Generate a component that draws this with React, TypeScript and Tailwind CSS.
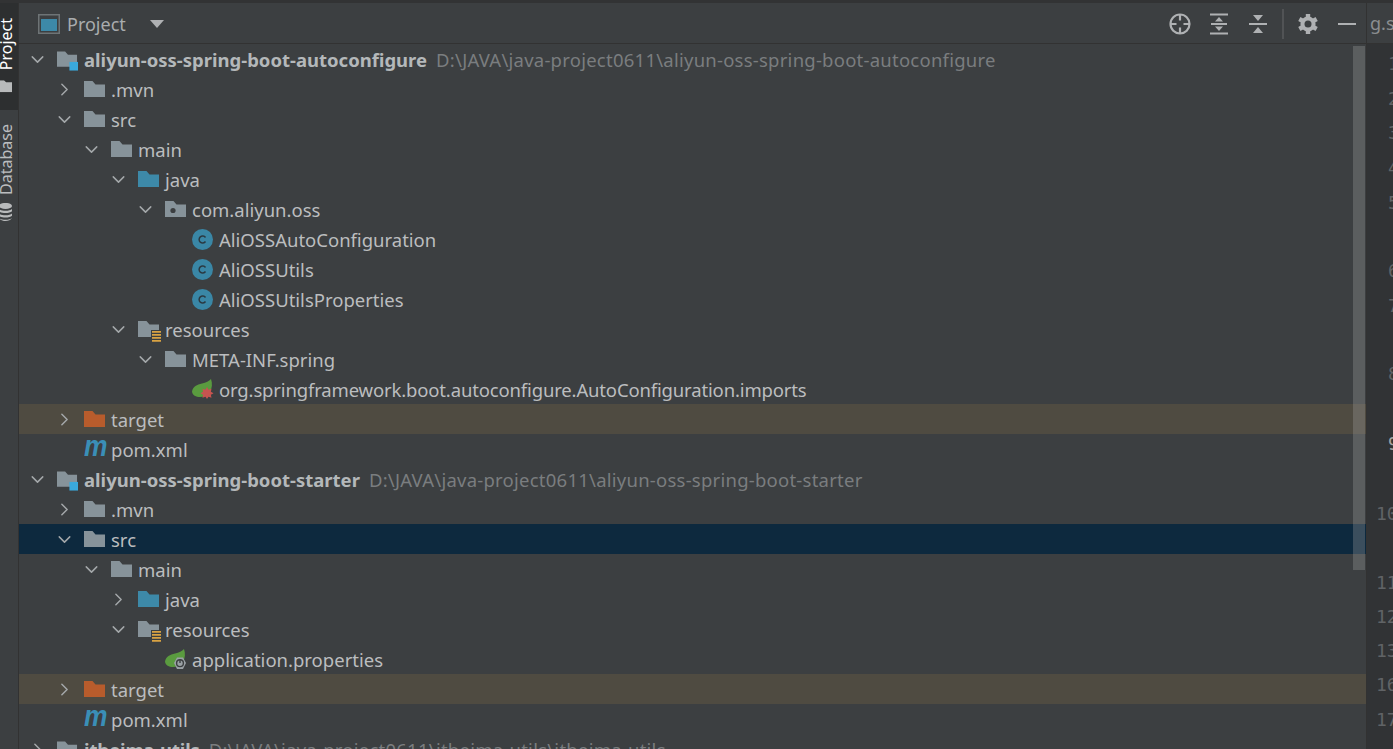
import React from 'react';
import { ChevronDown, ChevronRight } from 'lucide-react';

type Kind = 'module' | 'folder' | 'src' | 'pkg' | 'res' | 'target' | 'class' | 'maven' | 'springX' | 'springProps';

interface Row {
  depth: number;
  open?: boolean;
  kind: Kind;
  name: string;
  path?: string;
  bg?: string;
  tight?: boolean;
}

const rows: Row[] = [
  { depth: 0, open: true, kind: 'module', name: 'aliyun-oss-spring-boot-autoconfigure', path: 'D:\\JAVA\\java-project0611\\aliyun-oss-spring-boot-autoconfigure' },
  { depth: 1, open: false, kind: 'folder', name: '.mvn' },
  { depth: 1, open: true, kind: 'folder', name: 'src' },
  { depth: 2, open: true, kind: 'folder', name: 'main' },
  { depth: 3, open: true, kind: 'src', name: 'java' },
  { depth: 4, open: true, kind: 'pkg', name: 'com.aliyun.oss' },
  { depth: 5, kind: 'class', name: 'AliOSSAutoConfiguration' },
  { depth: 5, kind: 'class', name: 'AliOSSUtils' },
  { depth: 5, kind: 'class', name: 'AliOSSUtilsProperties' },
  { depth: 3, open: true, kind: 'res', name: 'resources' },
  { depth: 4, open: true, kind: 'folder', name: 'META-INF.spring' },
  { depth: 5, kind: 'springX', name: 'org.springframework.boot.autoconfigure.AutoConfiguration.imports', tight: true },
  { depth: 1, open: false, kind: 'target', name: 'target', bg: 'bg-[#4f4b41]' },
  { depth: 1, kind: 'maven', name: 'pom.xml' },
  { depth: 0, open: true, kind: 'module', name: 'aliyun-oss-spring-boot-starter', path: 'D:\\JAVA\\java-project0611\\aliyun-oss-spring-boot-starter' },
  { depth: 1, open: false, kind: 'folder', name: '.mvn' },
  { depth: 1, open: true, kind: 'folder', name: 'src', bg: 'bg-[#0d293e]' },
  { depth: 2, open: true, kind: 'folder', name: 'main' },
  { depth: 3, open: false, kind: 'src', name: 'java' },
  { depth: 3, open: true, kind: 'res', name: 'resources' },
  { depth: 4, kind: 'springProps', name: 'application.properties' },
  { depth: 1, open: false, kind: 'target', name: 'target', bg: 'bg-[#4f4b41]' },
  { depth: 1, kind: 'maven', name: 'pom.xml' },
  { depth: 0, open: false, kind: 'module', name: 'itheima-utils', path: 'D:\\JAVA\\java-project0611\\itheima-utils\\itheima-utils', tight: true },
];

// line numbers of the editor behind the panel, soft wrapped so the gaps differ
const gutter: { n: string; mt: string }[] = [
  { n: '1', mt: 'mt-[4px]' },
  { n: '2', mt: 'mt-[5px]' },
  { n: '3', mt: 'mt-[4px]' },
  { n: '4', mt: 'mt-[5px]' },
  { n: '5', mt: 'mt-[5px]' },
  { n: '6', mt: 'mt-[38px]' },
  { n: '7', mt: 'mt-[5px]' },
  { n: '8', mt: 'mt-[38px]' },
  { n: '9', mt: 'mt-[40px]' },
  { n: '10', mt: 'mt-[40px]' },
  { n: '11', mt: 'mt-[39px]' },
  { n: '12', mt: 'mt-[4px]' },
  { n: '13', mt: 'mt-[4px]' },
  { n: '16', mt: 'mt-[4px]' },
  { n: '17', mt: 'mt-[5px]' },
];

const FolderShape = ({ color }: { color: string }) => (
  <svg width="21" height="16" viewBox="0 0 21 16"><path d="M0 0h8.5l3 3.5H21V16H0z" fill={color} /></svg>
);

const Leaf = () => (
  <path d="M0 12.5C1 7.5 5 5.5 10 4.5c4-.8 7-2.2 9-4.5 1.5 4.500 1.200 9-1 12.500-2.500 3.500-6 5.500-10 5.500-4 0-7.500-1.500-8-5.500z" fill="#5a9b3f" />
);

const NodeIcon = ({ kind }: { kind: Kind }) => {
  switch (kind) {
    case 'module':
      return (
        <svg width="22" height="20" viewBox="0 0 22 20" className="mb-[-4px]">
          <path d="M0 0h8.500l3 3.500H21V16H0z" fill="#87939a" />
          <rect x="13" y="11" width="9" height="9" fill="#3aa9dc" />
        </svg>
      );
    case 'folder':
      return <FolderShape color="#87939a" />;
    case 'src':
      return <FolderShape color="#3d89a8" />;
    case 'target':
      return <FolderShape color="#b85c2c" />;
    case 'pkg':
      return (
        <svg width="21" height="16" viewBox="0 0 21 16">
          <path d="M0 0h8.500l3 3.500H21V16H0z" fill="#87939a" />
          <circle cx="8" cy="9.500" r="2.600" fill="#3c3f41" />
        </svg>
      );
    case 'res':
      return (
        <svg width="23" height="22" viewBox="0 0 23 22" className="mb-[-6px] mr-[-2px]">
          <path d="M0 0h8.500l3 3.500H21V16H0z" fill="#87939a" />
          <rect x="13" y="9" width="10" height="13" fill="#3c3f41" />
          <path d="M14 10h9v1.700h-9zM14 13h9v1.700h-9zM14 16h9v1.700h-9zM14 19h9v1.700h-9z" fill="#d9a343" />
        </svg>
      );
    case 'class':
      return (
        <svg width="21" height="21" viewBox="0 0 21 21">
          <circle cx="10.500" cy="10.500" r="10.500" fill="#3a87a6" />
          <path d="M13.500 8.500a3.500 3.500 0 1 0 0 4" fill="none" stroke="#2b3a42" strokeWidth="1.500" />
        </svg>
      );
    case 'maven':
      return <span className="font-['Liberation_Sans',sans-serif] italic font-bold text-[30px] leading-none text-[#3a8fb7] mt-[-7px] block w-[21px] origin-left scale-x-[0.88]">m</span>;
    case 'springX':
      return (
        <svg width="22" height="20" viewBox="0 0 22 20" className="shrink-0">
          <Leaf />
          <path d="M15 8l1.500 2.700 3-1-.6 3 2.600 1.500-2.600 1.500.6 3-3-1-1.500 2.300-1.500-2.300-3 1 .6-3-2.600-1.500 2.600-1.500-.6-3 3 1z" fill="#c75450" />
        </svg>
      );
    case 'springProps':
      return (
        <svg width="22" height="20" viewBox="0 0 22 20" className="shrink-0">
          <Leaf />
          <path d="M12 8.500h6l3 5.500-3 6h-6l-3-6z" fill="#9aa1a5" />
          <circle cx="15" cy="14.200" r="3.400" fill="none" stroke="#3c3f41" strokeWidth="1.400" />
          <path d="M15 10.500v3.500" stroke="#3c3f41" strokeWidth="1.400" />
        </svg>
      );
  }
};

const TreeRow = ({ row }: { row: Row }) => {
  const isModule = row.kind === 'module';
  return (
    <div className={`h-[30px] flex items-center shrink-0 pr-[28px] ${row.bg ?? ''}`} style={{ paddingLeft: 8 + row.depth * 27 }}>
      <span className="w-[21px] h-[21px] flex items-center justify-center shrink-0 text-[#a4a8aa] mr-[9px]">
        {row.open === true && <ChevronDown size={21} strokeWidth={1.7} />}
        {row.open === false && <ChevronRight size={21} strokeWidth={1.7} />}
      </span>
      <span className="w-[21px] flex justify-start items-center shrink-0">
        <NodeIcon kind={row.kind} />
      </span>
      <span className={`ml-[6px] pt-[2px] whitespace-nowrap text-[18.500px] ${isModule ? 'font-bold text-[#b4b8ba]' : 'text-[#bbbdbf]'} ${row.tight ? 'tracking-[-0.15px]' : ''}`}>{row.name}</span>
      {row.path && <span className="ml-[9px] pt-[2px] whitespace-nowrap text-[18.500px] tracking-[0.24px] text-[#7a7d7f]">{row.path}</span>}
    </div>
  );
};

export default function App() {
  return (
    <div className="w-[1393px] h-[749px] overflow-hidden flex flex-col bg-[#3c3f41] font-['Noto_Sans','Open_Sans',sans-serif]">
      <div className="h-[3px] bg-[#323334] shrink-0" />
      <div className="flex flex-1 min-h-0">
        {/* tool window strip */}
        <div className="w-[19px] shrink-0 bg-[#3c3f41] border-r border-[#323232] flex flex-col overflow-hidden">
          <div className="h-[107px] bg-[#2d2f30] flex items-end justify-start shrink-0 overflow-hidden">
            <div className="[writing-mode:vertical-rl] rotate-180 text-[16px] leading-[17px] text-white flex items-center gap-[10px] mb-[18px] w-[12px]">
              <svg width="13" height="12" viewBox="0 0 13 12" className="rotate-180 shrink-0"><path d="M0 0h5l2 2h6v10H0z" fill="#b8babb" /></svg>
              <span>Project</span>
            </div>
          </div>
          <div className="mt-[14px] flex items-center justify-start">
            <div className="[writing-mode:vertical-rl] rotate-180 text-[16px] leading-[17px] text-[#bbbdbf] flex items-center gap-[8px] w-[12px]">
              <svg width="13" height="18" viewBox="0 0 13 18" className="rotate-180 shrink-0">
                <ellipse cx="6.500" cy="3" rx="6.500" ry="3" fill="#b8babb" />
                <path d="M0 6c2 2.400 11 2.400 13 0v2.400c-2 2.400-11 2.400-13 0zM0 10.500c2 2.400 11 2.400 13 0v2.400c-2 2.400-11 2.400-13 0zM0 15c2 2.400 11 2.400 13 0c-2 4-11 4-13 0z" fill="#b8babb" />
              </svg>
              <span>Database</span>
            </div>
          </div>
        </div>

        {/* project panel */}
        <div className="flex-1 min-w-0 flex flex-col relative">
          <div className="h-[41px] shrink-0 border-b border-[#323232] flex items-center pt-[2px] pl-[19px] pr-[10px]">
            <svg width="22" height="20" viewBox="0 0 22 20">
              <rect x="0.750" y="0.750" width="20.500" height="18.500" fill="none" stroke="#6e7476" strokeWidth="1.500" />
              <rect x="3" y="5" width="16" height="12" fill="#3d89a8" />
            </svg>
            <span className="ml-[7px] text-[18px] text-[#a9acae]">Project</span>
            <svg width="14" height="8" viewBox="0 0 14 8" className="ml-[24px]"><path d="M0 0h14L7 8z" fill="#afb1b3" /></svg>
            <div className="ml-auto flex items-center text-[#afb1b3]">
              <svg width="24" height="24" viewBox="0 0 24 24" fill="none" stroke="#afb1b3" strokeWidth="2.200" className="mr-[17px]">
                <circle cx="12" cy="12" r="9.500" />
                <path d="M12 2.500v6M12 15.500v6M2.500 12h6M15.500 12h6" />
              </svg>
              <svg width="20" height="24" viewBox="0 0 20 24" fill="#afb1b3" className="mr-[19px]">
                <rect x="1" y="1.500" width="18" height="2" />
                <rect x="1" y="20.500" width="18" height="2" />
                <rect x="2" y="11" width="16" height="2" />
                <path d="M10 5l4 4.500H6zM10 19l-4-4.500h8z" />
              </svg>
              <svg width="20" height="24" viewBox="0 0 20 24" fill="#afb1b3" className="mr-[14px]">
                <rect x="1" y="11" width="18" height="2" />
                <path d="M5 3h10l-5 6zM10 15l5 6H5z" />
              </svg>
              <div className="w-[2px] h-[30px] bg-[#515355] mr-[14px]" />
              <svg width="20" height="20" viewBox="0 0 20 20" className="mr-[20px]">
                <circle cx="10" cy="10" r="5.800" fill="none" stroke="#afb1b3" strokeWidth="3.600" />
                {[0, 60, 120].map((a) => (
                  <rect key={a} x="7.800" y="0" width="4.400" height="20" fill="#afb1b3" transform={`rotate(${a} 10 10)`} />
                ))}
                <circle cx="10" cy="10" r="3.500" fill="#3c3f41" />
              </svg>
              <div className="w-[18px] h-[2.500px] bg-[#afb1b3]" />
            </div>
          </div>
          <div className="flex-1 min-h-0 overflow-hidden flex flex-col">
            {rows.map((r, i) => <TreeRow key={i} row={r} />)}
          </div>
          {/* scrollbar thumb */}
          <div className="absolute top-[43px] right-[1px] w-[12px] h-[524px] bg-[#a6a6a6]/30" />
        </div>

        {/* editor gutter */}
        <div className="w-[27px] shrink-0 bg-[#313335] border-l border-[#323232] overflow-hidden flex flex-col">
          <div className="h-[41px] shrink-0 bg-[#3c3f41] border-b border-[#323232] flex items-center pl-[3px] text-[18px] text-[#8b8e90] whitespace-nowrap">g.s</div>
          <div className="flex-1 min-h-0 pl-[9px] font-['DejaVu_Sans_Mono',monospace] text-[18px] text-[#606366] whitespace-nowrap">
            {gutter.map((g) => (
              <div key={g.n} className={`h-[30px] flex items-center ${g.mt} ${g.n.length === 1 ? 'pl-[12px]' : ''} ${g.n === '9' ? 'text-[#a4a3a3]' : ''}`}>{g.n}</div>
            ))}
          </div>
        </div>
      </div>
    </div>
  );
}
